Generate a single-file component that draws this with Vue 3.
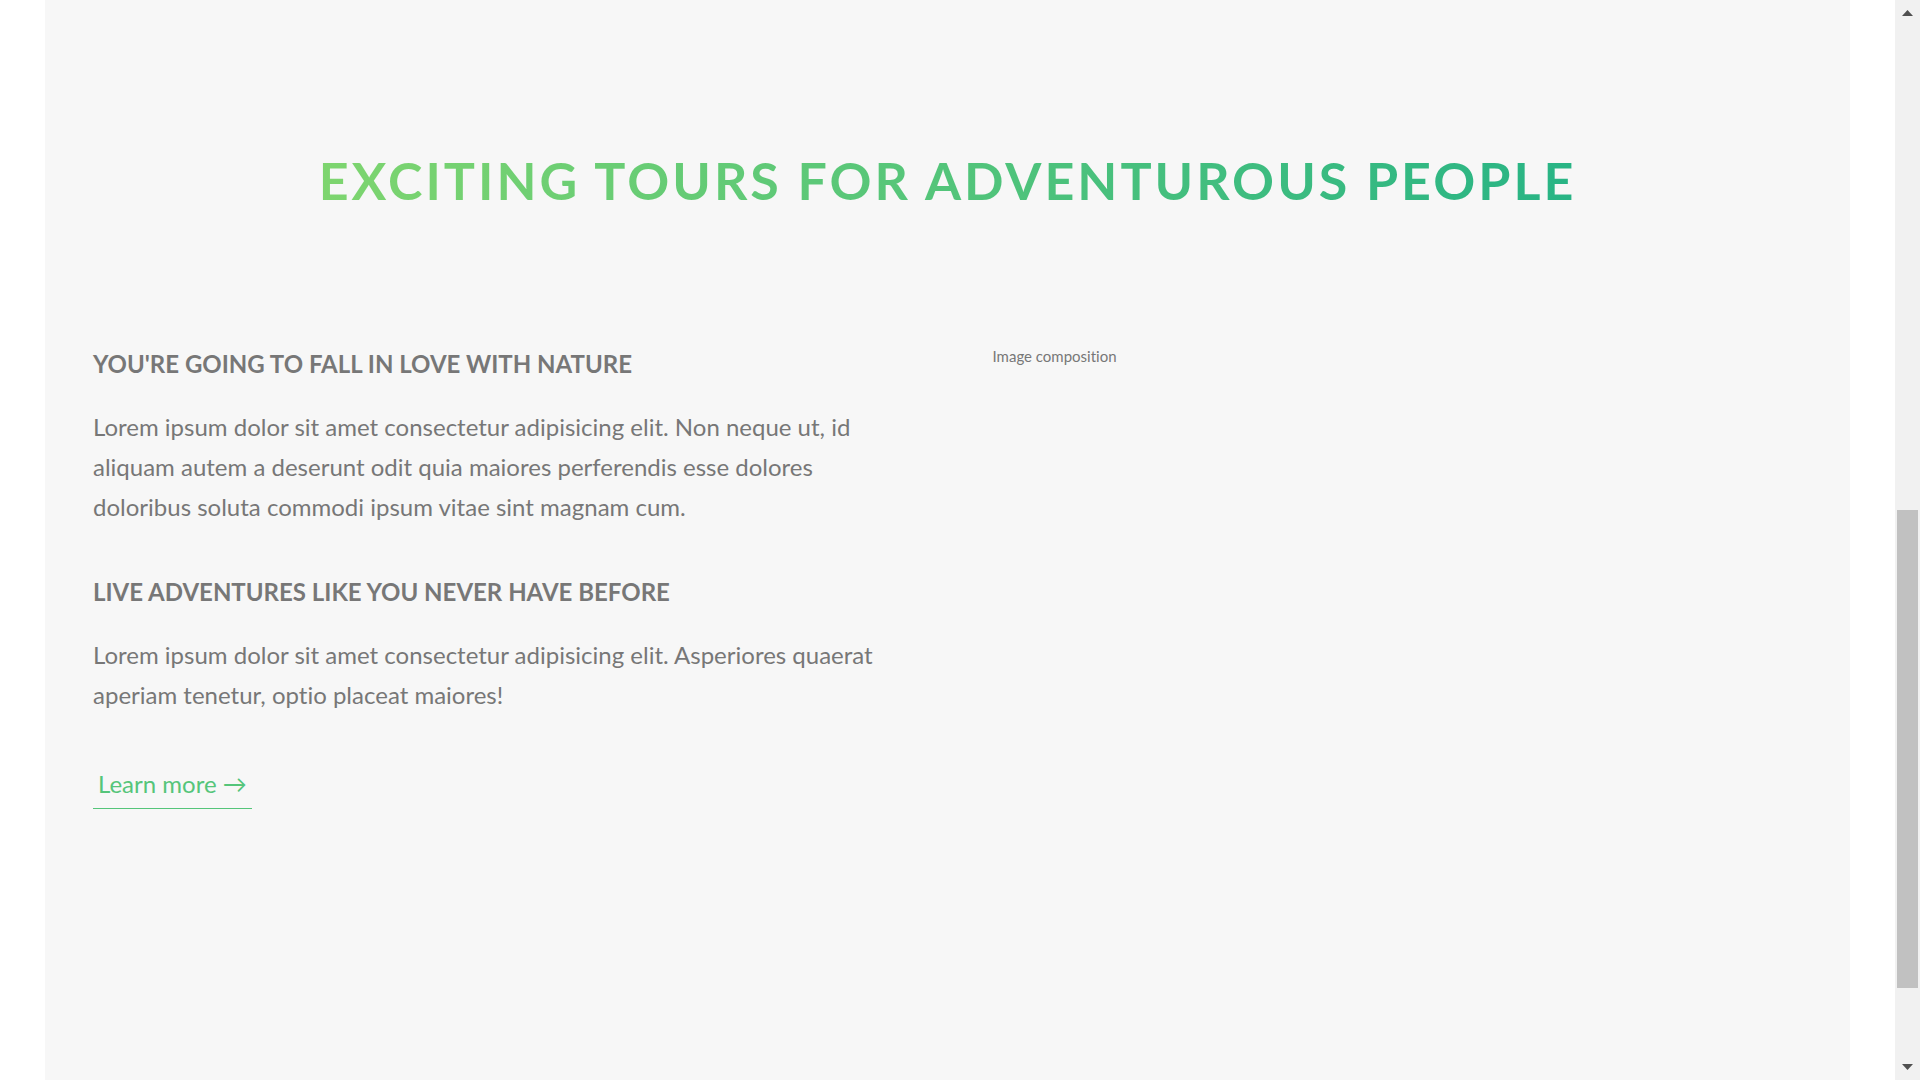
<script setup>
const features = [
  {
    title: "You're going to fall in love with nature",
    text: 'Lorem ipsum dolor sit amet consectetur adipisicing elit. Non neque ut, id aliquam autem a deserunt odit quia maiores perferendis esse dolores doloribus soluta commodi ipsum vitae sint magnam cum.'
  },
  {
    title: 'Live adventures like you never have before',
    text: 'Lorem ipsum dolor sit amet consectetur adipisicing elit. Asperiores quaerat aperiam tenetur, optio placeat maiores!'
  }
]
</script>

<template>
  <div class="page">
    <main class="about">
      <h2 class="heading"><span>Exciting tours for adventurous people</span></h2>
      <div class="row">
        <div class="col">
          <section v-for="f in features" :key="f.title" class="feature">
            <h3>{{ f.title }}</h3>
            <p>{{ f.text }}</p>
          </section>
          <a href="#" class="more">Learn more →</a>
        </div>
        <div class="col caption">Image composition</div>
      </div>
    </main>
    <div class="scrollbar" aria-hidden="true">
      <svg width="25" height="25" viewBox="0 0 25 25"><path d="M7 16l5.500-6 5.500 6z" fill="#505050" /></svg>
      <div class="track"><div class="thumb"></div></div>
      <svg width="25" height="25" viewBox="0 0 25 25"><path d="M7 9l5.500 6 5.500-6z" fill="#505050" /></svg>
    </div>
  </div>
</template>

<style>
body {
  background: #fff;
}
</style>

<style scoped>
.page {
  display: flex;
  height: 100vh;
  overflow: hidden;
  font-family: Lato, sans-serif;
  font-variant-ligatures: none;
  color: #777;
}
.about {
  flex: 1;
  margin: 0 45px;
  padding: 147px 48px 0;
  background: #f7f7f7;
}
.heading {
  margin: 0 0 131px;
  text-align: center;
  font-size: 52px;
  line-height: 66px;
  font-weight: 700;
  letter-spacing: 3px;
  text-transform: uppercase;
}
.heading span {
  display: inline-block;
  background: linear-gradient(to right, #7ed56f, #28b485);
  -webkit-background-clip: text;
  background-clip: text;
  color: transparent;
}
.row {
  display: grid;
  grid-template-columns: 1fr 1fr;
  gap: 90px;
}
.feature {
  margin-bottom: 45px;
}
h3 {
  margin: 0 0 23px;
  font-size: 24px;
  line-height: 40px;
  font-weight: 700;
  text-transform: uppercase;
}
p {
  margin: 0;
  font-size: 24px;
  line-height: 40px;
}
.more {
  display: inline-block;
  padding: 4px 5px;
  border-bottom: 1px solid #55c57a;
  color: #55c57a;
  font-size: 24px;
  line-height: 40px;
  text-decoration: none;
}
.caption {
  font-size: 15px;
  line-height: 24px;
}
.scrollbar {
  display: flex;
  flex-direction: column;
  width: 25px;
  background: #f1f1f1;
}
.track {
  flex: 1;
  padding: 485px 2px 0;
}
.thumb {
  height: 478px;
  background: #c1c1c1;
}
</style>
